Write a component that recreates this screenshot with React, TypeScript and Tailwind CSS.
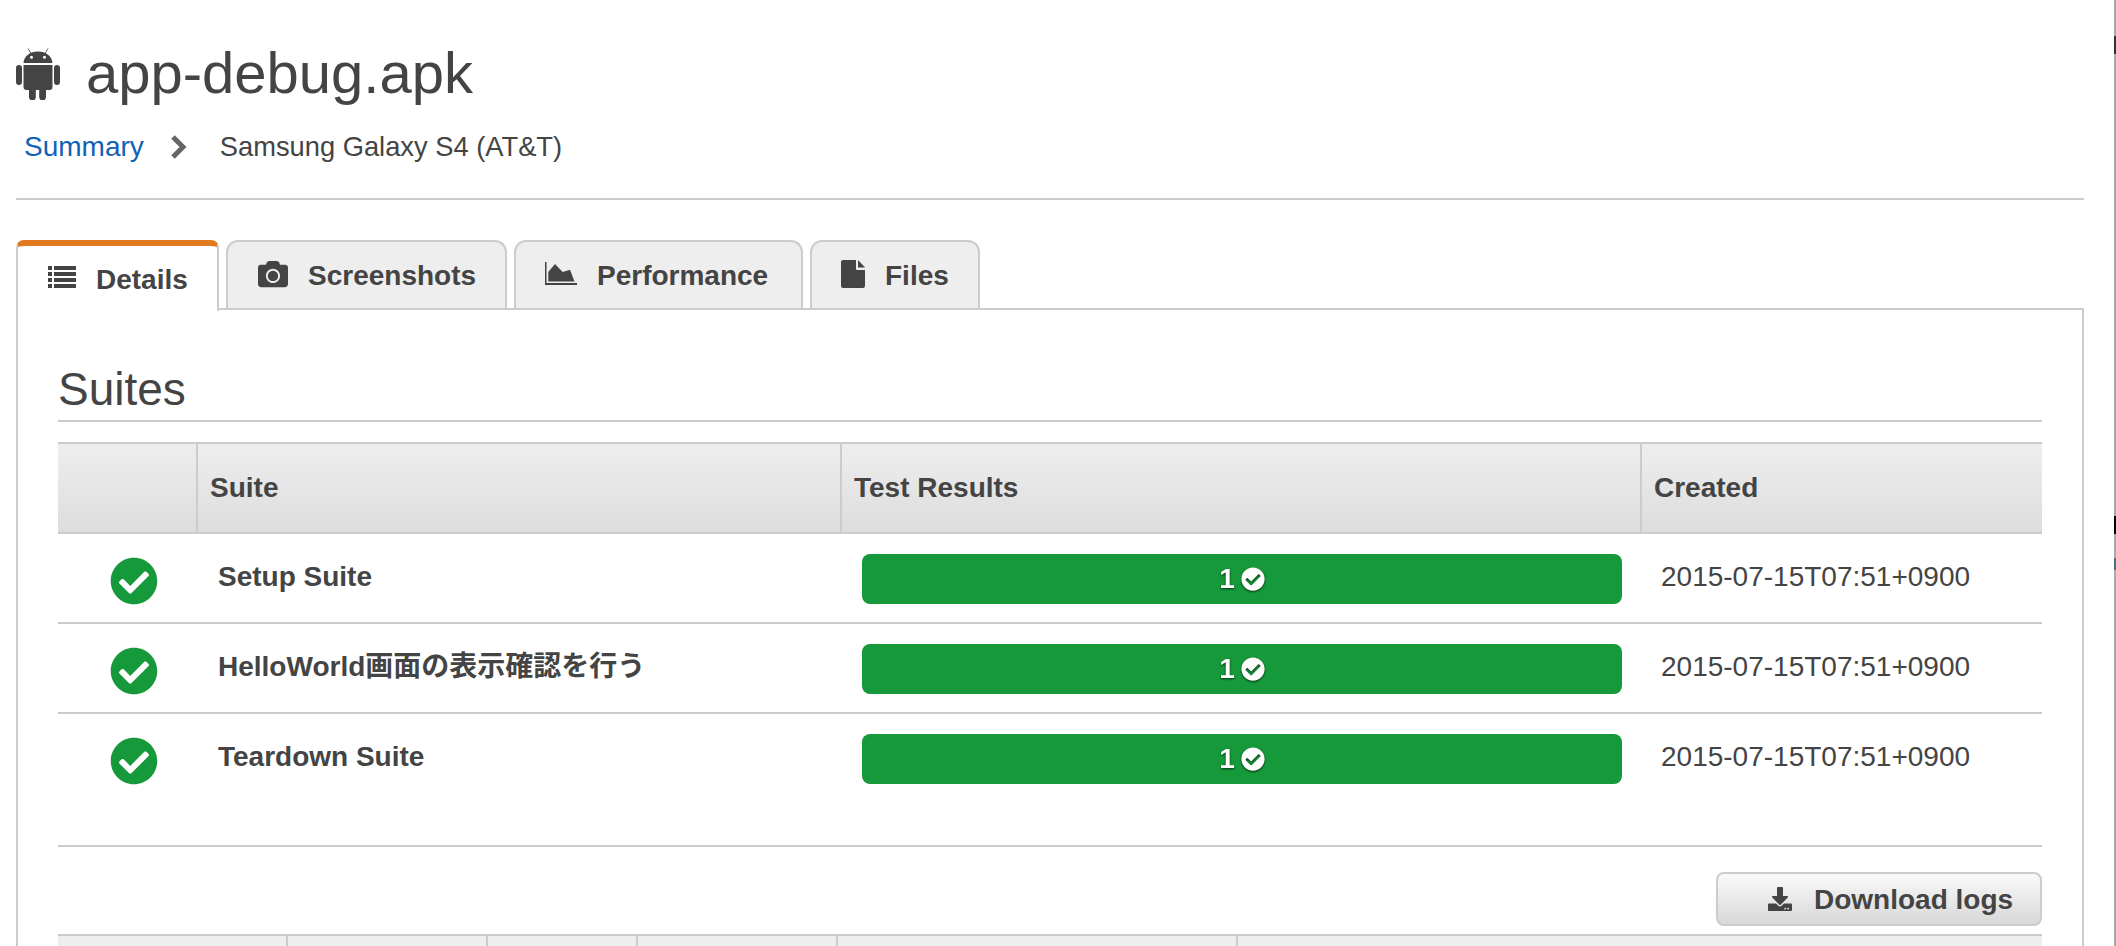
import { FaCamera, FaCheckCircle, FaDownload } from "react-icons/fa";

const suites = [
  { name: "Setup Suite", created: "2015-07-15T07:51+0900" },
  { name: "HelloWorld画面の表示確認を行う", created: "2015-07-15T07:51+0900" },
  { name: "Teardown Suite", created: "2015-07-15T07:51+0900" },
];

function AndroidIcon() {
  return (
    <svg width="44" height="52" viewBox="0 0 44 52" fill="currentColor">
      <path d="M12 0.5l3 5M32 0.5l-3 5" stroke="currentColor" strokeWidth="0.8" />
      <path fillRule="evenodd" d="M7.5 15C8 8 14 3.5 22 3.5S36 8 36.5 15zM15.5 7.8a1.5 1.5 0 1 0 0 3 1.5 1.5 0 0 0 0-3zM28.5 7.8a1.5 1.5 0 1 0 0 3 1.5 1.5 0 0 0 0-3z" />
      <path d="M7.5 17h29v22q0 3-3 3h-3.500v7a3.300 3.300 0 0 1-6.800 0v-7h-3.400v7a3.300 3.300 0 0 1-6.800 0v-7H10.500q-3 0-3-3z" />
      <rect x="0" y="17" width="6" height="20" rx="3" />
      <rect x="38" y="17" width="6" height="20" rx="3" />
    </svg>
  );
}

function ListIcon() {
  return (
    <svg width="28" height="22" viewBox="0 0 28 22" fill="currentColor" className="mt-[3px]">
      {[0, 6, 12, 18].map((y) => (
        <g key={y}>
          <rect x="0" y={y} width="4" height="4" />
          <rect x="6" y={y} width="22" height="4" />
        </g>
      ))}
    </svg>
  );
}

function AreaIcon() {
  return (
    <svg width="32" height="23" viewBox="0 0 32 23" fill="currentColor" className="mt-[3px]">
      <path d="M0 0h1.500v21H32v2H0z" />
      <path d="M3.300 19.500V10L10 2l7.700 8 7.300-2.300 4.500 11.800z" />
    </svg>
  );
}

function FileIcon() {
  return (
    <svg width="24" height="28" viewBox="0 0 24 28" fill="currentColor" className="mt-[1px]">
      <path d="M2 0h13v9q0 1 1 1h8v16q0 2-2 2H2q-2 0-2-2V2q0-2 2-2z" />
      <path d="M17 0l7 7.500h-7z" />
    </svg>
  );
}

const tabs = [
  { label: "Screenshots", icon: <FaCamera size={30} />, width: "w-[281px] pl-[30px]" },
  { label: "Performance", icon: <AreaIcon />, width: "w-[289px] pl-[29px]" },
  { label: "Files", icon: <FileIcon />, width: "w-[170px] pl-[29px]" },
];

export default function App() {
  return (
    <div className="relative h-[946px] overflow-hidden bg-white pl-4 pr-8 text-[28px] text-[#444] font-['Liberation_Sans','Noto_Sans_CJK_JP',sans-serif]">
      {/* Title */}
      <div className="flex h-[106px] items-start">
        <div className="mt-12">
          <AndroidIcon />
        </div>
        <h1 className="mt-10 ml-[26px] text-[58px] leading-[66px]">app-debug.apk</h1>
      </div>
      <div className="flex h-[94px] items-start border-b-2 border-[#ccc] pt-6 pl-2">
        <span className="leading-[34px] text-[#0f62b4]">Summary</span>
        <svg width="17" height="24" viewBox="0 0 17 24" fill="none" className="mt-[5px] ml-[26px] text-[#666]">
          <path d="M3 2l10 10L3 22" stroke="currentColor" strokeWidth="5" />
        </svg>
        <span className="ml-[33px] text-[27.3px] leading-[34px]">Samsung Galaxy S4 (AT&amp;T)</span>
      </div>

      {/* Tabs */}
      <div className="relative z-10 mt-10 flex h-[68px] gap-[7px]">
        <div className="flex h-[71px] w-[203px] items-start gap-5 rounded-t-lg border-x-2 border-t-[6px] border-[#ccc] border-t-[#e17a1f] bg-white pt-[17px] pl-[30px] font-bold">
          <ListIcon />
          <span className="leading-[34px]">Details</span>
        </div>
        {tabs.map((tab) => (
          <div
            key={tab.label}
            className={`flex items-start gap-5 rounded-t-xl border-x-2 border-t-2 border-[#ccc] bg-[#eee] pt-[17px] font-bold ${tab.width}`}
          >
            {tab.icon}
            <span className="leading-[34px]">{tab.label}</span>
          </div>
        ))}
      </div>

      {/* Panel */}
      <div className="border-x-2 border-t-2 border-[#ccc] pr-10 pl-10">
        <h2 className="mt-[55px] border-b-2 border-[#ccc] pb-[7px] text-[46px] leading-[48px]">Suites</h2>

        <div className="mt-[20px] grid grid-cols-[138px_644px_800px_402px] border-y-2 border-[#ccc] bg-linear-to-b from-[#eee] to-[#ddd] font-bold">
          <div className="h-[88px]" />
          <div className="flex items-center border-l-2 border-[#ccc] pl-3">Suite</div>
          <div className="flex items-center border-l-2 border-[#ccc] pl-3">Test Results</div>
          <div className="flex items-center border-l-2 border-[#ccc] pl-3">Created</div>
        </div>

        {suites.map((suite, i) => (
          <div
            key={suite.name}
            className={`grid h-[90px] grid-cols-[140px_644px_800px_400px] border-b-2 ${i < suites.length - 1 ? "border-[#ccc]" : "border-transparent"}`}
          >
            <div className="flex items-center justify-center pt-[6px] pl-3">
              <FaCheckCircle size={48} className="text-[#16993a]" />
            </div>
            <div className="flex items-center pb-[3px] pl-[20px] font-bold">{suite.name}</div>
            <div className="flex items-center pt-[2px] pr-5 pl-[20px]">
              <div className="flex h-[50px] w-full items-center justify-center gap-[6px] rounded-lg bg-[#16993a] font-bold text-white">
                <span className="drop-shadow-[0_1px_1px_rgba(0,0,0,0.7)]">1</span>
                <FaCheckCircle size={24} className="drop-shadow-[0_1px_1px_rgba(0,0,0,0.7)]" />
              </div>
            </div>
            <div className="flex items-center pb-[3px] pl-[19px]">{suite.created}</div>
          </div>
        ))}

        <div className="mt-[41px] flex justify-end border-t-2 border-[#ccc] pt-[25px]">
          <button className="flex h-[54px] w-[326px] items-center gap-[22px] rounded-lg border-2 border-[#ccc] bg-linear-to-b from-[#fafafa] to-[#d8d8d8] pl-[50px] font-bold">
            <FaDownload size={24} />
            <span className="pt-[2px]">Download logs</span>
          </button>
        </div>

        <div className="mt-2 grid h-[40px] grid-cols-[228px_200px_150px_200px_400px_1fr] border-t-2 border-[#ccc] bg-[#eee]">
          <div />
          <div className="border-l-2 border-[#ccc]" />
          <div className="border-l-2 border-[#ccc]" />
          <div className="border-l-2 border-[#ccc]" />
          <div className="border-l-2 border-[#ccc]" />
          <div className="border-l-2 border-[#ccc]" />
        </div>
      </div>

      {/* edge of the next window, caught in the capture */}
      <div className="absolute top-0 right-0 h-full w-[2px] bg-[#a8a8a8]" />
      <div className="absolute top-[36px] right-0 h-[18px] w-[2px] bg-[#333]" />
      <div className="absolute top-[516px] right-0 h-[18px] w-[2px] bg-black" />
      <div className="absolute top-[558px] right-0 h-[12px] w-[2px] bg-[#46708c]" />
    </div>
  );
}
